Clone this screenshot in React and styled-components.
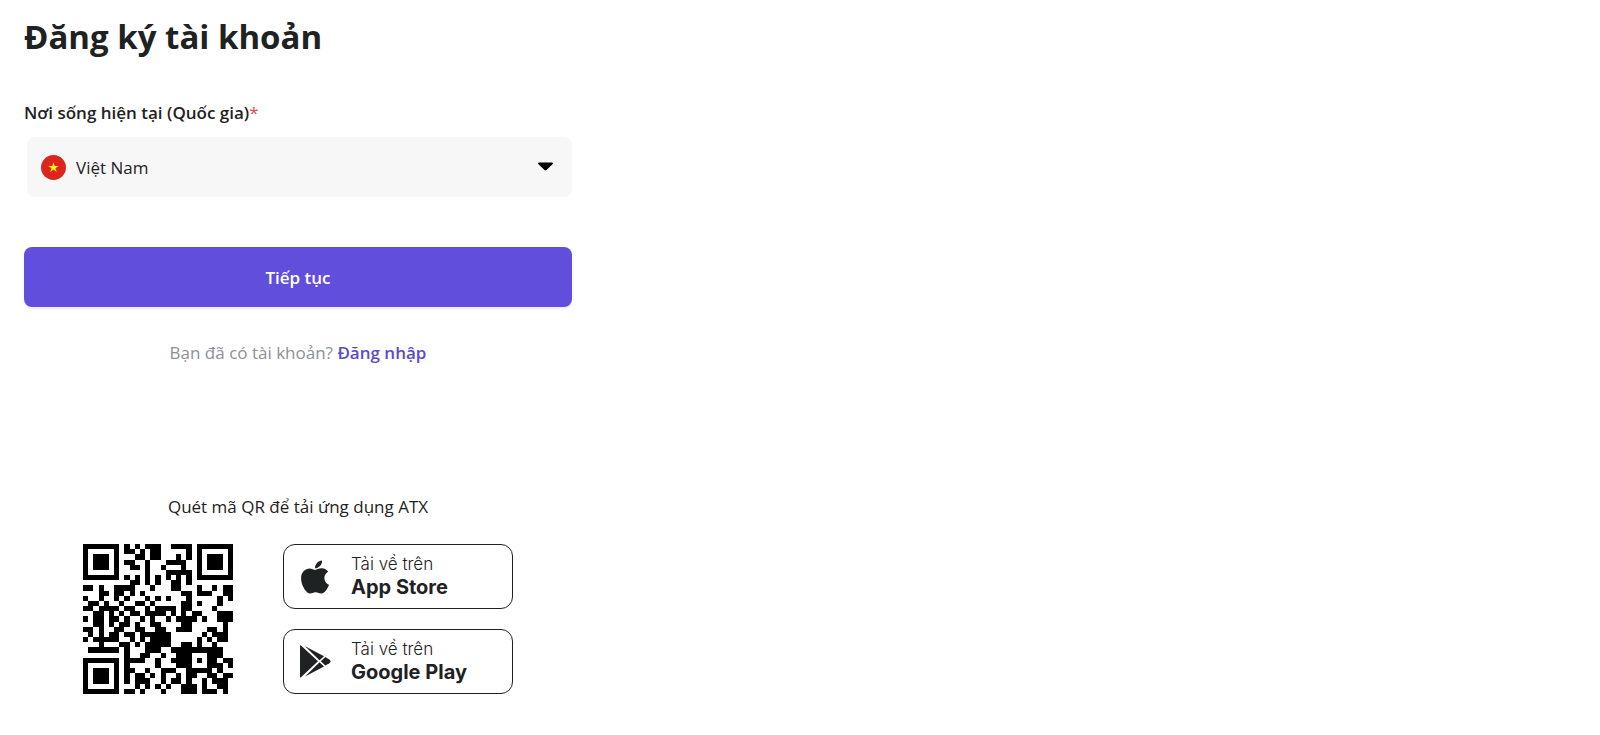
import React from 'react';
import styled, { createGlobalStyle } from 'styled-components';
import { FaApple } from 'react-icons/fa';

const GlobalStyle = createGlobalStyle`
    * {
        box-sizing: border-box;
    }

    body {
        margin: 0;
        background-color: #ffffff;
        color: #1f2223;
        font-family: "Open Sans", "Noto Sans", sans-serif;
        font-size: 17px;
        line-height: 24px;
    }
`;

const Page = styled.main`
    width: 100%;
    max-width: 596px;
    padding: 13px 24px 40px;
`;

const Title = styled.h1`
    margin: 0 0 39px;
    font-size: 33px;
    line-height: 48px;
    font-weight: 700;
`;

const Form = styled.form`
    display: flex;
    flex-direction: column;
`;

const Label = styled.label`
    margin-bottom: 12px;
    line-height: 25px;
    font-weight: 600;
`;

const Required = styled.span`
    color: #e5484d;
    font-weight: 400;
`;

const SelectBox = styled.div`
    display: flex;
    align-items: center;
    height: 60px;
    margin-left: 3px;
    padding: 0 18px 0 14px;
    border-radius: 8px;
    background-color: #f7f7f7;
`;

const Select = styled.select`
    flex: 1;
    height: 100%;
    margin-left: 10px;
    padding: 0;
    border: none;
    outline: none;
    appearance: none;
    background-color: transparent;
    color: inherit;
    font-family: inherit;
    font-size: 17px;
    cursor: pointer;
`;

const SubmitButton = styled.button`
    height: 60px;
    margin-top: 50px;
    border: none;
    border-radius: 8px;
    background-color: #614edc;
    box-shadow: 0 2px 3px rgba(97, 78, 220, 0.12);
    color: #ffffff;
    font-family: inherit;
    font-size: 17px;
    font-weight: 600;
    cursor: pointer;
`;

const LoginHint = styled.p`
    margin: 34px 0 0;
    color: #8d8f98;
    text-align: center;
`;

const LoginLink = styled.a`
    color: #5e4ac8;
    font-weight: 600;
    text-decoration: none;
`;

const Download = styled.section`
    margin-top: 130px;
`;

const DownloadText = styled.p`
    margin: 0 0 25px;
    text-align: center;
`;

const DownloadRow = styled.div`
    display: flex;
    justify-content: center;
    gap: 50px;
`;

const StoreList = styled.div`
    display: flex;
    flex-direction: column;
    gap: 20px;
    width: 230px;
`;

const StoreLink = styled.a`
    display: flex;
    align-items: center;
    height: 65px;
    padding: 0 16px 0 15px;
    border: 1px solid #1f2223;
    border-radius: 12px;
    color: #1f2223;
    font-family: Inter, sans-serif;
    font-variation-settings: "opsz" 14;
    text-decoration: none;
`;

const StoreIcon = styled.span`
    display: flex;
    align-items: center;
    justify-content: center;
    width: 32px;
    margin-right: 20px;
`;

const StoreText = styled.span`
    display: flex;
    flex-direction: column;
    padding-bottom: 2px;
    font-size: 17px;
    font-weight: 300;
    line-height: 23px;
`;

const StoreName = styled.strong`
    font-size: 20px;
    font-weight: 700;
`;

const qrRows = [
    '11111110101011100111101111111',
    '10000010110101100000101000001',
    '10111010001101100010101011101',
    '10111010110010001111001011101',
    '10111010011010010001001011101',
    '10000010000010001111101000001',
    '11111110101010101010101111111',
    '00000000011010100110100000000',
    '11010011110001000110001001011',
    '00011011010100000001101110011',
    '10010010100010101000100000101',
    '01101001001101000001101000100',
    '11011110110010111101100001000',
    '00110101011011110101011000111',
    '10110110100101001011110100111',
    '00110101101001100001100000010',
    '11010011001100110011100011010',
    '01010110110111111000000101110',
    '10111110010101111000001010110',
    '00010001101011111001101001000',
    '01111110100011100111111111100',
    '00000000100110010011100011100',
    '11111110111100100111101011011',
    '10000010100000100011100011101',
    '10111010110010011100111110100',
    '10111010101101010010110011011',
    '10111010101110010110100101110',
    '10000010001010101001110100110',
    '11111110110100010001110111010',
];

function QrCode() {
    return (
        <svg width="150" height="150" viewBox="0 0 29 29" shapeRendering="crispEdges" role="img" aria-label="QR ATX">
            {qrRows.map((row, y) => (
                row.split('').map((cell, x) => (
                    cell === '1' && <rect key={`${x}-${y}`} x={x} y={y} width="1" height="1" />
                ))
            ))}
        </svg>
    );
}

function VietnamFlag() {
    return (
        <svg width="25" height="25" viewBox="0 0 25 25" aria-hidden="true">
            <circle cx="12.5" cy="12.5" r="12.5" fill="#dc251c" />
            <path fill="#fff212" d="M12.5 7.2l1.2 3.7h3.9l-3.1 2.3 1.2 3.8-3.2-2.4-3.2 2.4 1.2-3.8-3.1-2.3h3.9z" />
        </svg>
    );
}

function CaretIcon() {
    return (
        <svg width="17" height="10" viewBox="0 0 17 10" aria-hidden="true">
            <path d="M2 .6h13c.9 0 1.3.9.7 1.5L9.5 8c-.6.5-1.4.5-2 0L1.3 2.1C.7 1.5 1.1.6 2 .6z" />
        </svg>
    );
}

function GooglePlayIcon() {
    return (
        <svg width="31" height="33" viewBox="0 0 31 33" fill="currentColor" aria-hidden="true">
            <path d="M0 .8Q0-.2 1 .6L18 16.3 1 32.2Q0 33 0 32z" />
            <path d="M5 1.2L24 11.2 19.5 15.3z" />
            <path d="M5 31.6L24 21.4 19.5 17.3z" />
            <path d="M20.8 16.3L25.3 12l4 2.4q2.7 1.900 0 3.8l-4 2.400z" />
        </svg>
    );
}

const stores = [
    { name: 'App Store', icon: <FaApple size={38} /> },
    { name: 'Google Play', icon: <GooglePlayIcon /> },
];

export default function App() {
    return (
        <Page>
            <GlobalStyle />
            <Title>Đăng ký tài khoản</Title>
            <Form onSubmit={(e) => e.preventDefault()}>
                <Label htmlFor="country">
                    Nơi sống hiện tại (Quốc gia)<Required>*</Required>
                </Label>
                <SelectBox>
                    <VietnamFlag />
                    <Select id="country" defaultValue="vn">
                        <option value="vn">Việt Nam</option>
                    </Select>
                    <CaretIcon />
                </SelectBox>
                <SubmitButton type="submit">Tiếp tục</SubmitButton>
            </Form>
            <LoginHint>
                Bạn đã có tài khoản? <LoginLink href="#login">Đăng nhập</LoginLink>
            </LoginHint>
            <Download>
                <DownloadText>Quét mã QR để tải ứng dụng ATX</DownloadText>
                <DownloadRow>
                    <QrCode />
                    <StoreList>
                        {stores.map((store) => (
                            <StoreLink key={store.name} href="#download">
                                <StoreIcon>{store.icon}</StoreIcon>
                                <StoreText>
                                    Tải về trên
                                    <StoreName>{store.name}</StoreName>
                                </StoreText>
                            </StoreLink>
                        ))}
                    </StoreList>
                </DownloadRow>
            </Download>
        </Page>
    );
}
